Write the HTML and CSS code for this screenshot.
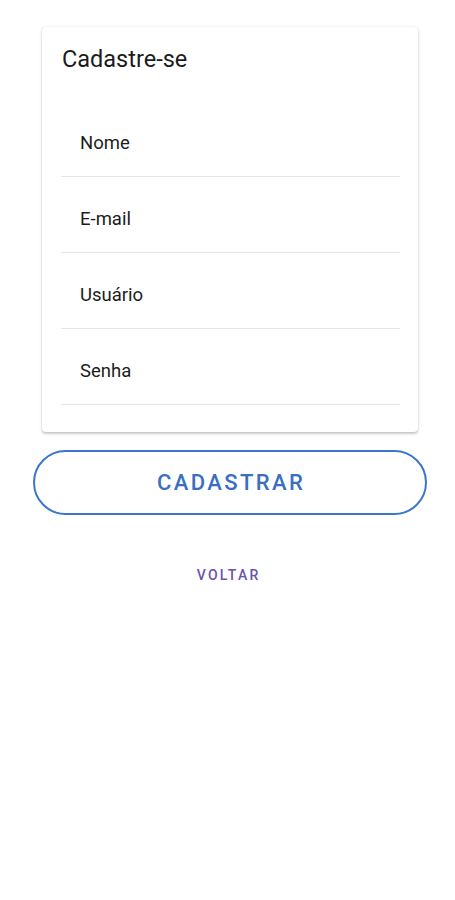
FILE: index.html
```html
<html>

<head>
  <meta name="viewport" content="width=device-width, initial-scale=1">
  <link rel="stylesheet" href="styles.css">
</head>

<body>
  <!-- Signup form card -->
  <div class="card">
    <p class="card_title">Cadastre-se</p>
    <div class="field"><span class="field_label">Nome</span></div>
    <div class="field"><span class="field_label">E-mail</span></div>
    <div class="field"><span class="field_label">Usuário</span></div>
    <div class="field"><span class="field_label">Senha</span></div>
  </div>

  <button class="btn_outline">CADASTRAR</button>

  <div class="back_wrapper">
    <button class="btn_text">VOLTAR</button>
  </div>
</body>

</html>
```

FILE: styles.css
```css
body {
  margin: 0;
  padding: 27px 0 0;
  font-family: Roboto, 'Liberation Sans', sans-serif;
  background: #fff;
  color: #1c1c1c;
}

.card {
  margin-left: 42px;
  width: 376px;
  box-sizing: border-box;
  padding: 20px 18px 27px 19px;
  border-radius: 4px;
  background: #fff;
  box-shadow: 0 2px 2px rgba(0, 0, 0, 0.14), 0 1px 4px rgba(0, 0, 0, 0.12), 0 0 1px rgba(0, 0, 0, 0.1);
}

.card_title {
  margin: 0 0 30px 1px;
  font-size: 23.5px;
  line-height: 24px;
  font-weight: 400;
}

.field {
  height: 75px;
  box-sizing: content-box;
  padding-left: 19px;
  border-bottom: 1px solid #e4e4e4;
}

.field_label {
  display: block;
  padding-top: 32px;
  font-size: 18.5px;
  line-height: 20px;
}

.btn_outline {
  display: block;
  margin: 18px 0 0 33px;
  width: 394px;
  height: 65px;
  border: 2px solid #3c76cc;
  border-radius: 33px;
  background: #fff;
  color: #3a6fc2;
  font-family: Roboto, 'Liberation Sans', sans-serif;
  font-size: 22px;
  font-weight: 500;
  letter-spacing: 2.4px;
  text-indent: 2.4px;
}

.back_wrapper {
  display: flex;
  justify-content: center;
  margin-top: 50px;
}

.btn_text {
  border: 0;
  background: none;
  padding: 0;
  color: #6a52ae;
  font-family: Roboto, 'Liberation Sans', sans-serif;
  font-size: 14px;
  line-height: 20px;
  font-weight: 500;
  letter-spacing: 2.2px;
  text-indent: 2.2px;
}
```
